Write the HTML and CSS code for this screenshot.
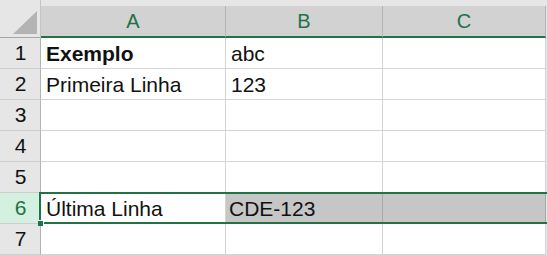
FILE: index.html
```html
<!DOCTYPE html>
<html lang="pt">
<head>
  <meta charset="UTF-8">
  <meta name="viewport" content="width=device-width, initial-scale=1.0">
  <title>Planilha</title>
  <link rel="stylesheet" href="styles.css">
</head>
<body>
  <div class="sheet">
    <div class="grid">
      <!-- Column headers -->
      <div class="corner"><span class="tri"></span></div>
      <div class="col-head">A</div>
      <div class="col-head">B</div>
      <div class="col-head">C</div>

      <div class="row-head">1</div>
      <div class="cell bold">Exemplo</div>
      <div class="cell">abc</div>
      <div class="cell"></div>

      <div class="row-head">2</div>
      <div class="cell">Primeira Linha</div>
      <div class="cell">123</div>
      <div class="cell"></div>

      <div class="row-head">3</div>
      <div class="cell"></div>
      <div class="cell"></div>
      <div class="cell"></div>

      <div class="row-head">4</div>
      <div class="cell"></div>
      <div class="cell"></div>
      <div class="cell"></div>

      <div class="row-head">5</div>
      <div class="cell"></div>
      <div class="cell"></div>
      <div class="cell"></div>

      <div class="row-head active">6</div>
      <div class="cell">Última Linha</div>
      <div class="cell picked">CDE-123</div>
      <div class="cell picked"></div>

      <div class="row-head">7</div>
      <div class="cell"></div>
      <div class="cell"></div>
      <div class="cell"></div>
    </div>

    <!-- Selection A6:C6 -->
    <div class="selection"><span class="handle"></span></div>
  </div>
</body>
</html>
```

FILE: styles.css
```css
body {
  margin: 0;
  padding: 0;
  background: #ffffff;
  font-family: "Liberation Sans", Arial, sans-serif;
  font-size: 21px;
  color: #111;
  overflow: hidden;
}

.sheet {
  position: relative;
  width: 547px;
  height: 255px;
  background: #e6e6e6;
}

.grid {
  display: grid;
  grid-template-columns: 41px 185px 157px 163px;
  grid-template-rows: 38px repeat(7, 31px);
}

.grid > div {
  box-sizing: border-box;
}

.corner {
  display: flex;
  justify-content: flex-end;
  align-items: flex-end;
  padding: 0 3px 3px 0;
  background: #e6e6e6;
  border-bottom: 1px solid #a6a6a6;
  border-right: 1px solid #c4c4c4;
}
.tri {
  width: 24px;
  height: 23px;
  background: #b4b4b4;
  clip-path: polygon(100% 0, 100% 100%, 0 100%);
}

.col-head {
  margin-top: 6px;
  display: flex;
  align-items: center;
  justify-content: center;
  background: #d2d2d2;
  color: #217346;
  border-right: 1px solid #b4b4b4;
  border-bottom: 2px solid #217346;
  padding-top: 1px;
  font-size: 20px;
}

.row-head {
  display: flex;
  align-items: center;
  justify-content: center;
  background: #e6e6e6;
  border-right: 1px solid #b4b4b4;
  border-bottom: 1px solid #cecece;
  padding-left: 1px;
}
.row-head.active {
  background: #d3f0e0;
  color: #217346;
}

.cell {
  display: flex;
  align-items: center;
  padding-left: 5px;
  padding-top: 1px;
  background: #fff;
  border-right: 1px solid #d4d4d4;
  border-bottom: 1px solid #d4d4d4;
  white-space: nowrap;
}
.cell.bold {
  font-weight: bold;
}
.cell.picked {
  background: #c6c6c6;
  border-right-color: #a8a8a8;
  padding-left: 3px;
}

.selection {
  position: absolute;
  left: 39px;
  top: 192px;
  width: 530px;
  height: 32px;
  box-sizing: border-box;
  border: 2px solid #217346;
}
.handle {
  position: absolute;
  left: -3px;
  bottom: -4px;
  width: 5px;
  height: 5px;
  background: #217346;
  border: 1px solid #fff;
  border-left: none;
  border-bottom: none;
}
```
